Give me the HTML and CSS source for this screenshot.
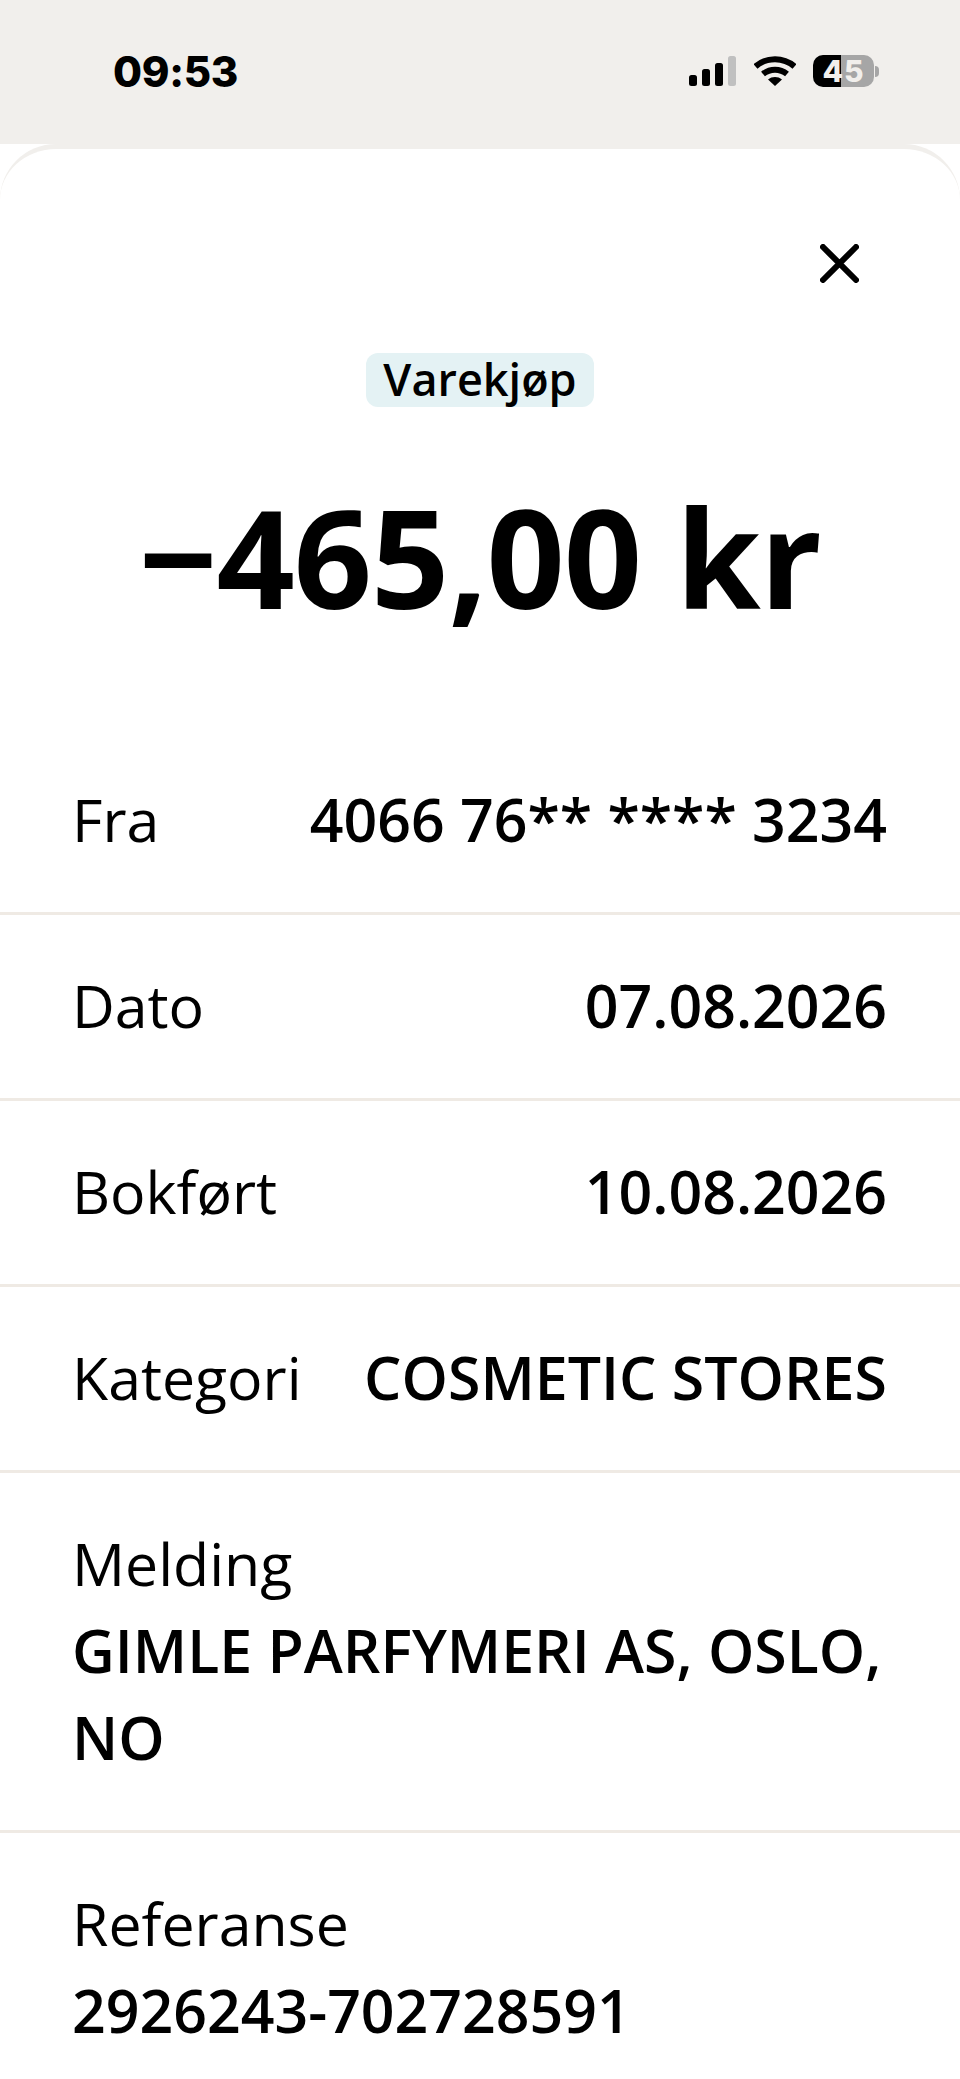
FILE: index.html
```html
<!DOCTYPE html>
<html lang="no">
<head>
<meta charset="utf-8">
<title>Varekjøp</title>
<link rel="stylesheet" href="styles.css">
</head>
<body>
<header class="status">
  <span class="time">09:53</span>
  <div class="status-icons">
    <svg class="signal" width="47" height="30" viewBox="0 0 47 30">
      <rect x="0" y="19" width="8" height="11" rx="2.500" fill="#000"/>
      <rect x="13" y="13" width="8" height="17" rx="2.500" fill="#000"/>
      <rect x="26" y="7" width="8" height="23" rx="2.500" fill="#000"/>
      <rect x="39" y="0" width="8" height="30" rx="2.500" fill="#c0c0c0"/>
    </svg>
    <svg class="wifi" width="42" height="30" viewBox="0 0 42 30">
      <path d="M1.500 10.500C12.500 0.800 29.500 0.800 40.500 10.500" fill="none" stroke="#000" stroke-width="6"/>
      <path d="M9 18C16 12.200 26 12.200 33 18" fill="none" stroke="#000" stroke-width="6"/>
      <path d="M14 23.500C18 20.200 24 20.200 28 23.500L21 30Z" fill="#000"/>
    </svg>
    <div class="battery">
      <div class="battery-body"><span class="battery-text">45</span></div>
      <div class="battery-cap"></div>
    </div>
  </div>
</header>
<main class="sheet">
  <div class="close-row">
    <svg class="close" width="39" height="39" viewBox="0 0 39 39">
      <path d="M3 3L36 36M36 3L3 36" fill="none" stroke="#000" stroke-width="6" stroke-linecap="round"/>
    </svg>
  </div>
  <div class="tag-row"><span class="tag">Varekjøp</span></div>
  <h1 class="amount">−465,00 kr</h1>
  <dl class="rows">
    <div class="row"><dt>Fra</dt><dd>4066 76** **** 3234</dd></div>
    <div class="row"><dt>Dato</dt><dd>07.08.2026</dd></div>
    <div class="row"><dt>Bokført</dt><dd>10.08.2026</dd></div>
    <div class="row"><dt>Kategori</dt><dd>COSMETIC STORES</dd></div>
    <div class="row stack"><dt>Melding</dt><dd>GIMLE PARFYMERI AS, OSLO, NO</dd></div>
    <div class="row stack"><dt>Referanse</dt><dd>2926243-702728591</dd></div>
  </dl>
</main>
</body>
</html>
```
FILE: styles.css
```css
html, body {
  margin: 0;
  padding: 0;
  background: #fff;
}
body {
  width: 960px;
  height: 2079px;
  overflow: hidden;
  font-family: "Open Sans", "Noto Sans", sans-serif;
  color: #000;
}
.status {
  height: 144px;
  box-sizing: border-box;
  background: #f1efec;
  display: flex;
  justify-content: space-between;
  align-items: flex-start;
  padding: 48px 81px 0 113px;
}
.time {
  font-family: "Inter", "Liberation Sans", sans-serif;
  font-weight: 800;
  font-size: 42px;
  line-height: 48px;
  letter-spacing: -0.300px;
}
.status-icons {
  display: flex;
  align-items: flex-start;
  padding-top: 8px;
}
.signal, .wifi { display: block; }
.signal { margin-right: 18px; }
.wifi { margin-right: 17px; }
.battery {
  display: flex;
  align-items: center;
  height: 32px;
  margin-top: -1px;
}
.battery-body {
  width: 61px;
  height: 32px;
  border-radius: 10px;
  background: linear-gradient(90deg, #000 0 46%, #a6a6a6 46% 100%);
  display: flex;
  align-items: center;
  justify-content: center;
}
.battery-text {
  font-family: "Inter", "Liberation Sans", sans-serif;
  font-weight: 800;
  font-size: 30px;
  line-height: 32px;
  letter-spacing: 1px;
  color: #f1efec;
}
.battery-cap {
  width: 4px;
  height: 11px;
  margin-left: 1px;
  border-radius: 0 4px 4px 0;
  background: #a6a6a6;
}
.sheet {
  height: 1935px;
  box-sizing: border-box;
  background: #fff;
  border: solid #f1efec;
  border-width: 5px 0 0;
  border-radius: 56px 56px 0 0;
  padding: 0 73px;
}
.close-row {
  display: flex;
  justify-content: flex-end;
  padding: 95px 28px 0 0;
}
.close { display: block; }
.tag-row {
  display: flex;
  justify-content: center;
  margin-top: 70px;
}
.tag {
  background: #e4f2f4;
  border-radius: 12px;
  padding: 0 17px;
  height: 54px;
  font-size: 45px;
  line-height: 52px;
  font-weight: 600;
}
.amount {
  margin: 69px 0 0;
  font-size: 137px;
  line-height: 160px;
  font-weight: 700;
  text-align: center;
  white-space: nowrap;
  letter-spacing: -1px;
}
.rows {
  margin: 93px -73px 0;
}
.row {
  display: flex;
  justify-content: space-between;
  align-items: center;
  height: 186px;
  box-sizing: border-box;
  padding: 0 73px 2px 72px;
  border-bottom: 3px solid #efeae4;
  font-size: 59px;
  line-height: 87px;
}
.row.stack {
  display: block;
  height: auto;
  padding-top: 47px;
  padding-bottom: 49px;
}
.row:last-child { border-bottom: 0; }
dt { font-weight: 400; }
dd {
  margin: 0;
  font-weight: 600;
  white-space: nowrap;
}
.stack dd { white-space: normal; }
```
